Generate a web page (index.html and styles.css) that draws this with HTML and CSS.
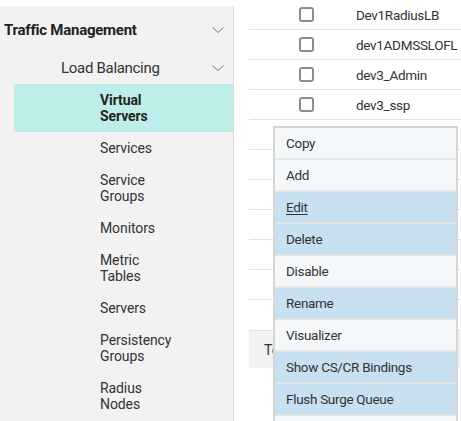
FILE: index.html
```html
<!DOCTYPE html>
<html>
<head>
<meta charset="utf-8">
<link rel="stylesheet" href="styles.css">
</head>
<body>
<div class="page">
  <nav class="sidebar">
    <div class="nav-top">
      <span>Traffic Management</span>
      <svg class="chev" width="12" height="6" viewBox="0 0 12 6"><path d="M0.5 0.5 L6 5.5 L11.5 0.5" fill="none" stroke="#777" stroke-width="1"/></svg>
    </div>
    <div class="nav-sub">
      <span>Load Balancing</span>
      <svg class="chev" width="12" height="6" viewBox="0 0 12 6"><path d="M0.5 0.5 L6 5.5 L11.5 0.5" fill="none" stroke="#777" stroke-width="1"/></svg>
    </div>
    <div class="nav-item active">Virtual<br>Servers</div>
    <div class="nav-item">Services</div>
    <div class="nav-item">Service<br>Groups</div>
    <div class="nav-item">Monitors</div>
    <div class="nav-item">Metric<br>Tables</div>
    <div class="nav-item">Servers</div>
    <div class="nav-item">Persistency<br>Groups</div>
    <div class="nav-item">Radius<br>Nodes</div>
  </nav>
  <main class="main">
    <div class="row"><span class="cb"></span><span class="name">Dev1RadiusLB</span></div>
    <div class="row"><span class="cb"></span><span class="name">dev1ADMSSLOFL</span></div>
    <div class="row"><span class="cb"></span><span class="name">dev3_Admin</span></div>
    <div class="row"><span class="cb"></span><span class="name">dev3_ssp</span></div>
    <div class="row"></div>
    <div class="row"></div>
    <div class="row"></div>
    <div class="row"></div>
    <div class="row"></div>
    <div class="row"></div>
    <div class="row last"></div>
    <div class="footer">Total</div>

    <ul class="ctx">
      <li class="light">Copy</li>
      <li class="light">Add</li>
      <li class="blue"><u>Edit</u></li>
      <li class="blue">Delete</li>
      <li class="light">Disable</li>
      <li class="blue">Rename</li>
      <li class="light">Visualizer</li>
      <li class="blue">Show CS/CR Bindings</li>
      <li class="blue">Flush Surge Queue</li>
      <li class="light">&nbsp;</li>
    </ul>
  </main>
</div>
</body>
</html>
```
FILE: styles.css
```css
* { box-sizing: border-box; }
html, body {
  margin: 0;
  padding: 0;
  width: 461px;
  height: 421px;
  overflow: hidden;
  background: #fff;
  font-family: Roboto, "Liberation Sans", sans-serif;
  color: #333;
}
.page {
  display: flex;
  height: 421px;
}
.sidebar {
  width: 234px;
  flex: none;
  margin-top: 6px;
  background: #f2f2f2;
  border-right: 1px solid #dcdcdc;
  font-size: 14px;
  line-height: 16px;
  letter-spacing: -0.1px;
}
.nav-top {
  display: flex;
  justify-content: space-between;
  align-items: center;
  padding: 16px 9px 14px 4px;
  font-weight: bold;
  font-size: 15px;
  letter-spacing: -0.25px;
  color: #222;
}
.nav-sub {
  display: flex;
  justify-content: space-between;
  align-items: center;
  padding: 8px 9px 8px 61px;
  font-size: 15px;
  letter-spacing: -0.3px;
}
.chev { display: block; }
.nav-item {
  padding: 8px 0 8px 100px;
}
.nav-item.active {
  margin-left: 14px;
  padding: 8px 0 8px 86px;
  background: #bdeeea;
  font-weight: bold;
  color: #222;
}
.main {
  flex: 1;
  position: relative;
  padding-left: 15px;
}
.row {
  height: 30px;
  border-bottom: 1px solid #e2e2e2;
  display: flex;
  align-items: center;
  font-size: 13.5px;
  letter-spacing: -0.3px;
  white-space: nowrap;
  overflow: hidden;
}
.row.last { height: 31px; }
.cb {
  flex: none;
  width: 15px;
  height: 15px;
  border: 2px solid #8c8c8c;
  border-radius: 3px;
  margin-left: 50px;
  margin-right: 42px;
}
.footer {
  height: 37px;
  background: #f2f2f2;
  padding-left: 15px;
  display: flex;
  align-items: center;
  font-size: 14px;
}
.ctx {
  position: absolute;
  left: 39px;
  top: 126px;
  width: 185px;
  margin: 0;
  padding: 0;
  list-style: none;
  border: 2px solid #d4d6d8;
  border-bottom: none;
  background: #e3e5e7;
  font-size: 13.5px;
  letter-spacing: -0.3px;
}
.ctx li {
  height: 30px;
  margin-bottom: 2px;
  padding-left: 11px;
  display: flex;
  align-items: center;
  color: #333;
}
.ctx li.light { background: #f4f8fb; }
.ctx li.blue { background: #c9e0f0; }
.ctx u { text-decoration-thickness: 1px; text-underline-offset: 2px; }
```
